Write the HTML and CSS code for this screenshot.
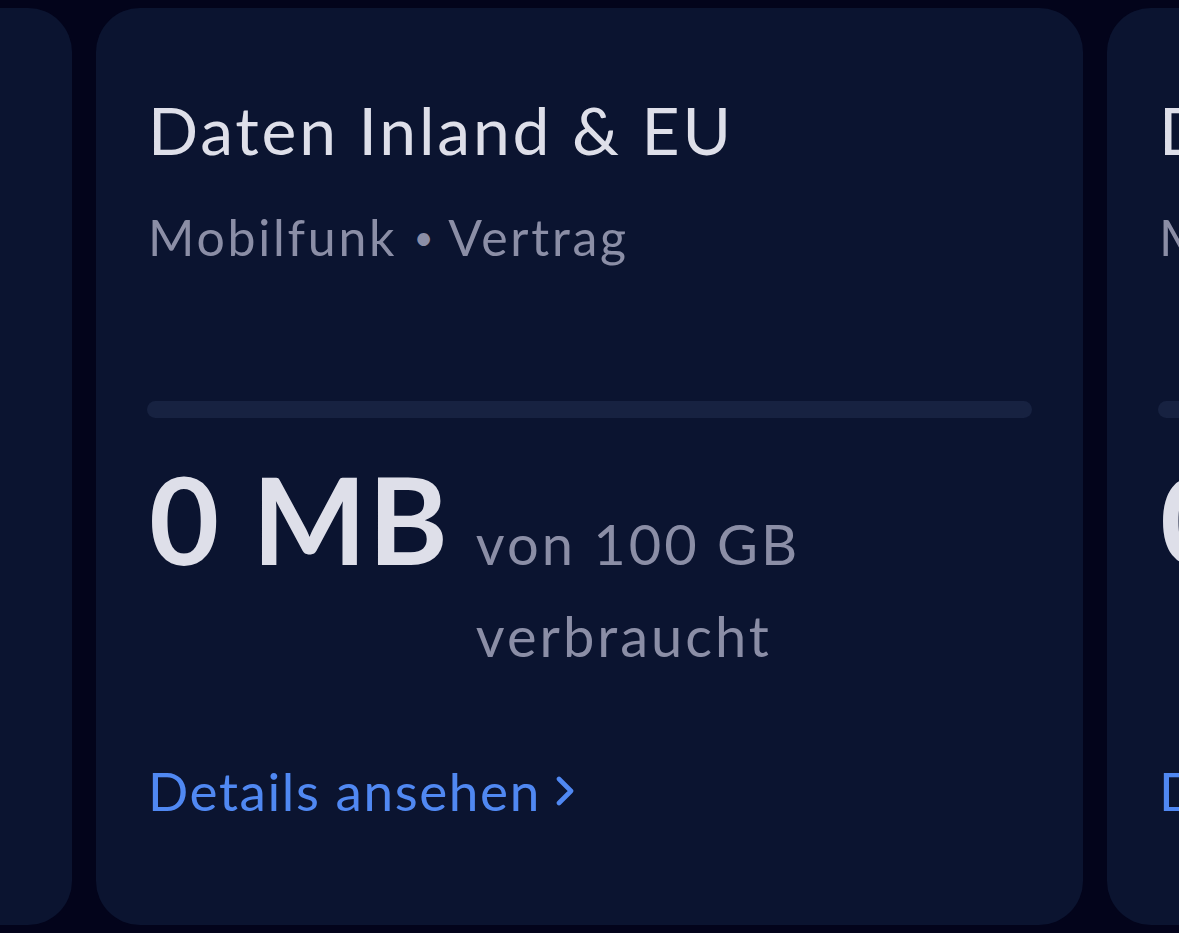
FILE: index.html
```html
<!DOCTYPE html>
<html lang="de">
<head>
<meta charset="utf-8">
<title>Tarife</title>
<link rel="stylesheet" href="styles.css">
</head>
<body>
<div class="carousel">
  <div class="track">
    <section class="card card-prev">
      <h2 class="title">Daten Ausland</h2>
      <p class="meta">Mobilfunk <span class="dot">•</span> Vertrag</p>
      <div class="bar"><div class="fill" style="width:0%"></div></div>
      <div class="usage">
        <span class="amount">0 MB</span>
        <span class="of">von 100 GB verbraucht</span>
      </div>
      <a class="link" href="#">Details ansehen <svg class="chev" viewBox="0 0 18 38" width="18" height="38" aria-hidden="true"><path d="M3 7 L15 19 L3 31" fill="none" stroke="currentColor" stroke-width="4.6" stroke-linecap="round" stroke-linejoin="round"/></svg></a>
    </section>
    <section class="card">
      <h2 class="title">Daten Inland &amp; EU</h2>
      <p class="meta">Mobilfunk <span class="dot">•</span> Vertrag</p>
      <div class="bar"><div class="fill" style="width:0%"></div></div>
      <div class="usage">
        <span class="amount">0 MB</span>
        <span class="of">von 100 GB verbraucht</span>
      </div>
      <a class="link" href="#">Details ansehen <svg class="chev" viewBox="0 0 18 38" width="18" height="38" aria-hidden="true"><path d="M3 7 L15 19 L3 31" fill="none" stroke="currentColor" stroke-width="4.6" stroke-linecap="round" stroke-linejoin="round"/></svg></a>
    </section>
    <section class="card">
      <h2 class="title">Daten Schweiz</h2>
      <p class="meta">Mobilfunk <span class="dot">•</span> Vertrag</p>
      <div class="bar"><div class="fill" style="width:0%"></div></div>
      <div class="usage">
        <span class="amount">0 MB</span>
        <span class="of">von 100 GB verbraucht</span>
      </div>
      <a class="link" href="#">Details ansehen <svg class="chev" viewBox="0 0 18 38" width="18" height="38" aria-hidden="true"><path d="M3 7 L15 19 L3 31" fill="none" stroke="currentColor" stroke-width="4.6" stroke-linecap="round" stroke-linejoin="round"/></svg></a>
    </section>
  </div>
</div>
</body>
</html>
```
FILE: styles.css
```css
html, body {
  margin: 0;
  padding: 0;
  background: #03041b;
  height: 100%;
}
body {
  font-family: "Lato", "Noto Sans", sans-serif;
  overflow: hidden;
}
.carousel {
  width: 1179px;
  height: 933px;
  overflow: hidden;
}
.track {
  display: flex;
  gap: 24px;
  padding-top: 8px;
  margin-left: -915px;
}
.card {
  flex: 0 0 987px;
  height: 917px;
  box-sizing: border-box;
  background: #0b1430;
  border-radius: 44px;
  padding: 82px 51px 0 51px;
  display: flex;
  flex-direction: column;
}
.card-prev {
  padding-right: 90px;
}
.title {
  margin: 0 0 0 1px;
  font-size: 66px;
  line-height: 80px;
  font-weight: 400;
  letter-spacing: 2.8px;
  color: #dedfe9;
  white-space: nowrap;
}
.meta {
  margin: 35px 0 0 1px;
  font-size: 50px;
  line-height: 64px;
  letter-spacing: 2.75px;
  color: #8b8ea6;
  white-space: nowrap;
}
.dot {
  display: inline-block;
  font-size: 34px;
  vertical-align: 6px;
  letter-spacing: 0;
  margin: 0 1px;
}
.bar {
  margin-top: 132px;
  height: 17px;
  border-radius: 9px;
  background: #172241;
  overflow: hidden;
}
.fill {
  height: 100%;
  background: #5088f2;
}
.usage {
  margin-top: 40px;
  display: flex;
  align-items: baseline;
  gap: 26px;
  padding-left: 2px;
}
.amount {
  font-size: 121px;
  line-height: 121px;
  font-weight: 700;
  letter-spacing: 1.8px;
  color: #dedfe9;
  white-space: nowrap;
}
.of {
  font-size: 56px;
  line-height: 92px;
  letter-spacing: 3px;
  color: #8b8ea6;
}
.link {
  margin: 77px 0 0 1px;
  display: flex;
  align-items: center;
  gap: 15px;
  font-size: 53px;
  line-height: 64px;
  letter-spacing: 1.6px;
  color: #5088f2;
  text-decoration: none;
  white-space: nowrap;
}
.chev {
  flex: 0 0 auto;
}
```
